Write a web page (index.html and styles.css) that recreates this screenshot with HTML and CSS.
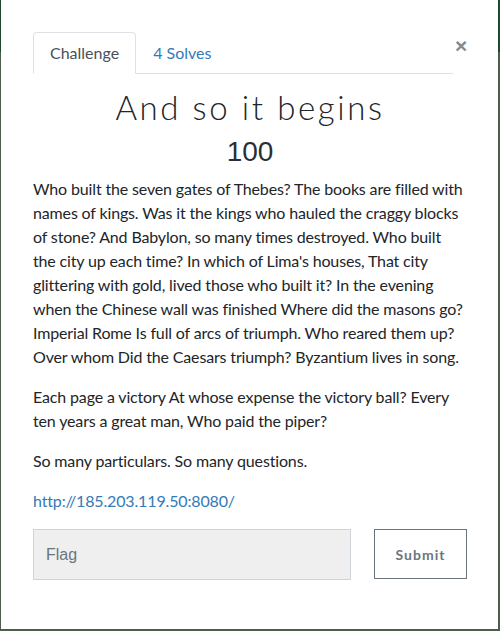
FILE: index.html
```html
<!DOCTYPE html>
<html lang="en">

<head>
    <meta charset="UTF-8">
    <meta name="viewport" content="width=device-width, initial-scale=1.0">
    <title>And so it begins</title>
    <link rel="stylesheet" href="styles.css">
</head>

<body>
    <div class="backdrop">
        <div class="modal">
            <!-- Tabs -->
            <div class="tab-row">
                <ul class="nav-tabs">
                    <li class="nav-item"><a class="nav-link active" href="#">Challenge</a></li>
                    <li class="nav-item"><a class="nav-link" href="#">4 Solves</a></li>
                </ul>
                <button class="close" type="button">&times;</button>
            </div>

            <!-- Challenge body -->
            <h2 class="challenge-name">And so it begins</h2>
            <h3 class="challenge-value">100</h3>

            <div class="challenge-desc">
                <p>Who built the seven gates of Thebes? The books are filled with names of kings. Was it the kings who hauled the craggy blocks of stone? And Babylon, so many times destroyed. Who built the city up each time? In which of Lima's houses, That city glittering with gold, lived those who built it? In the evening when the Chinese wall was finished Where did the masons go? Imperial Rome Is full of arcs of triumph. Who reared them up? Over whom Did the Caesars triumph? Byzantium lives in song.</p>
                <p>Each page a victory At whose expense the victory ball? Every ten years a great man, Who paid the piper?</p>
                <p>So many particulars. So many questions.</p>
                <p><a href="#">http://185.203.119.50:8080/</a></p>
            </div>

            <!-- Flag form -->
            <div class="flag-row">
                <input class="flag-input" type="text" placeholder="Flag">
                <button class="submit-btn" type="button">Submit</button>
            </div>
        </div>
    </div>
</body>

</html>
```

FILE: styles.css
```css
/* Reset */

* {
    margin: 0;
    padding: 0;
    box-sizing: border-box;
}

body {
    font-family: Lato, 'Noto Sans', sans-serif;
    background-color: #4c5d4c;
    color: #212529;
    height: 631px;
    overflow: hidden;
}

/* Dark top strip behind the modal */

.backdrop {
    background: linear-gradient(#1d4a2a 0, #1d4a2a 52px, #4c5d4c 52px);
    padding: 0 2px 2px 1px;
}

.modal {
    background-color: #ffffff;
    height: 629px;
    padding: 32px 31px 0 32px;
}

/* Tabs */

.tab-row {
    display: flex;
    align-items: flex-start;
    gap: 2px;
}

.nav-tabs {
    list-style: none;
    display: flex;
    flex: 1;
    border-bottom: 1px solid #dee2e6;
}

.nav-link {
    display: block;
    padding: 8px 16px;
    font-size: 16px;
    line-height: 24px;
    color: #337ab7;
    text-decoration: none;
    border: 1px solid transparent;
    border-top-left-radius: 4px;
    border-top-right-radius: 4px;
    margin-bottom: -1px;
}

.nav-link.active {
    color: #495057;
    border-color: #dee2e6 #dee2e6 #ffffff;
}

.close {
    background: none;
    border: none;
    font-family: 'Liberation Sans', Arial, sans-serif;
    font-size: 21px;
    font-weight: bold;
    line-height: 22px;
    color: #888888;
    width: 12px;
    margin-top: 3px;
    cursor: pointer;
}

/* Title */

.challenge-name {
    font-family: Lato, sans-serif;
    font-weight: 300;
    font-size: 33px;
    letter-spacing: 2.6px;
    line-height: 38px;
    text-align: center;
    padding-top: 14px;
    margin-bottom: 9px;
    color: #212529;
}

.challenge-value {
    font-family: 'Liberation Sans', Arial, sans-serif;
    font-weight: normal;
    font-size: 28px;
    line-height: 34px;
    text-align: center;
    margin-bottom: 8px;
    color: #2b2f33;
}

/* Description */

.challenge-desc {
    font-size: 16px;
    line-height: 24px;
    letter-spacing: -0.15px;
}

.challenge-desc p {
    margin-bottom: 16px;
}

.challenge-desc a {
    color: #337ab7;
    text-decoration: none;
}

/* Flag form */

.flag-row {
    display: flex;
    gap: 23px;
}

.flag-input {
    flex: 1;
    height: 51px;
    padding: 0 12px;
    background-color: #efefef;
    border: 1px solid #ced4da;
    font-family: 'Liberation Sans', Arial, sans-serif;
    font-size: 16px;
    color: #495057;
}

.flag-input::placeholder {
    color: #6c757d;
}

.submit-btn {
    width: 93px;
    height: 50px;
    background-color: #ffffff;
    border: 1px solid #6c757d;
    font-family: Lato, sans-serif;
    font-size: 14px;
    font-weight: bold;
    letter-spacing: 1px;
    color: #6c757d;
    cursor: pointer;
}
```
